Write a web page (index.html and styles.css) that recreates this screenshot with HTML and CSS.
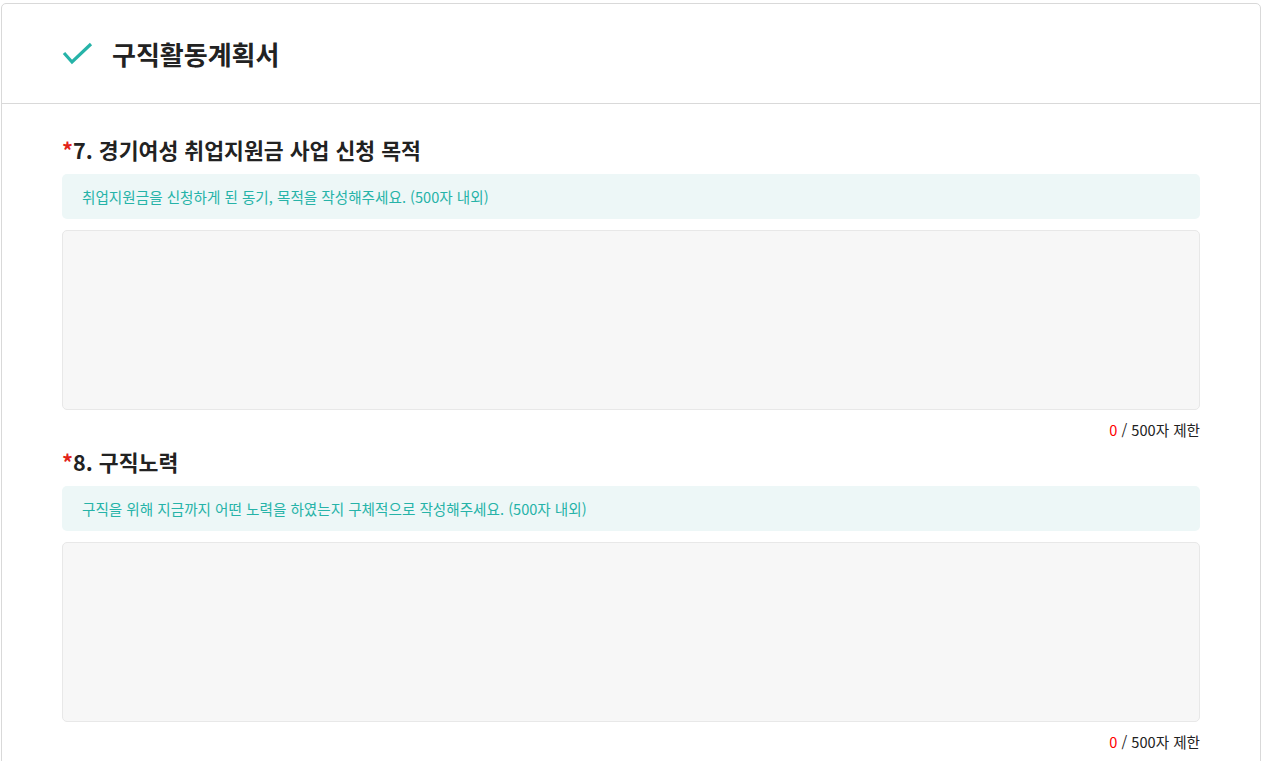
FILE: index.html
```html
<!doctype html>
<html lang="ko">
    <head>
        <meta charset="UTF-8" />
        <meta name="viewport" content="width=device-width, initial-scale=1.0" />
        <title>구직활동계획서</title>
        <link rel="stylesheet" href="styles.css">
    </head>
    <body>
        <div class="card">
            <div class="card-head">
                <svg class="check" width="32" height="24" viewBox="0 0 32 24">
                    <path d="M2 11 L10 20 L29 2" fill="none" stroke="#26b3a8" stroke-width="3.2" />
                </svg>
                <h1>구직활동계획서</h1>
            </div>
            <div class="card-body">
                <div class="field">
                    <h2><span class="req">*</span>7. 경기여성 취업지원금 사업 신청 목적</h2>
                    <p class="hint">취업지원금을 신청하게 된 동기, 목적을 작성해주세요. (500자 내외)</p>
                    <textarea class="answer"></textarea>
                    <div class="count"><span class="num">0</span> / 500자 제한</div>
                </div>
                <div class="field">
                    <h2><span class="req">*</span>8. 구직노력</h2>
                    <p class="hint">구직을 위해 지금까지 어떤 노력을 하였는지 구체적으로 작성해주세요. (500자 내외)</p>
                    <textarea class="answer"></textarea>
                    <div class="count"><span class="num">0</span> / 500자 제한</div>
                </div>
            </div>
        </div>
    </body>
</html>
```
FILE: styles.css
```css
:root {
    --teal: #26b3a8;
    --line: #d9d9d9;
}
body {
    margin: 0;
    background: #fff;
    color: #222;
    font-family: "Noto Sans CJK KR", "Noto Sans", sans-serif;
}
.card {
    margin: 3px 2px 0 1px;
    border: 1px solid var(--line);
    border-radius: 5px;
    background: #fff;
    min-height: 800px;
}
.card-head {
    display: flex;
    align-items: center;
    height: 99px;
    padding-left: 60px;
    border-bottom: 1px solid var(--line);
}
.check {
    margin-right: 18px;
    margin-top: 1px;
}
h1 {
    margin: 0;
    font-size: 26px;
    font-weight: 700;
    color: #222;
}
.card-body {
    padding: 30px 60px 0 60px;
}
h2 {
    margin: 0;
    font-size: 21.6px;
    line-height: 32px;
    font-weight: 700;
    color: #222;
}
.req {
    color: #e2231a;
}
.hint {
    margin: 8px 0 0;
    height: 45px;
    line-height: 45px;
    padding: 0 20px;
    background: #edf7f7;
    border-radius: 5px;
    color: var(--teal);
    font-size: 14.6px;
}
.answer {
    display: block;
    box-sizing: border-box;
    width: 100%;
    height: 180px;
    margin-top: 11px;
    background: #f7f7f7;
    border: 1px solid #e8e8e8;
    border-radius: 5px;
    resize: none;
    font-family: inherit;
}
.count {
    margin: 10px 0 6px;
    line-height: 20px;
    text-align: right;
    font-size: 14.6px;
    color: #222;
}
.num {
    color: #ff0000;
}
```
